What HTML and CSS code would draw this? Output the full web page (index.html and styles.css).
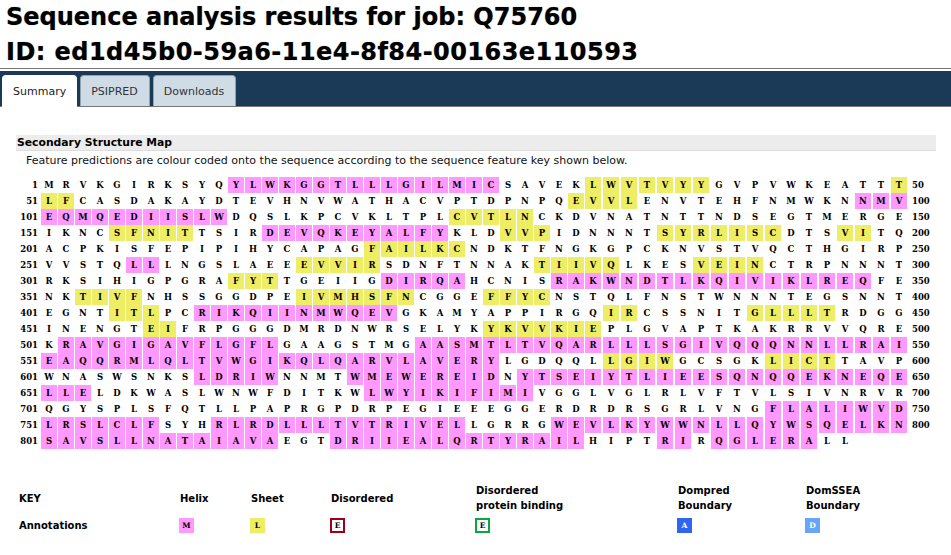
FILE: index.html
```html
<!DOCTYPE html>
<html lang="en">

<head>
    <meta charset="UTF-8">
    <meta name="viewport" content="width=device-width, initial-scale=1.0">
    <title>Sequence analysis results</title>
    <link rel="stylesheet" href="styles.css">
</head>

<body>

    <header class="page-title">
        <h1>Sequence analysis results for job: Q75760</h1>
        <h1 class="job-id">ID: ed1d45b0-59a6-11e4-8f84-00163e110593</h1>
    </header>

    <nav class="tab-bar">
        <a class="tab active">Summary</a>
        <a class="tab">PSIPRED</a>
        <a class="tab">Downloads</a>
    </nav>

    <section class="panel">
        <h2 class="panel-title">Secondary Structure Map</h2>
        <p class="panel-note">Feature predictions are colour coded onto the sequence according to the sequence feature key shown below.</p>

        <div id="seqMap" class="seq-map"></div>

        <div class="key">
            <div class="key-head first">KEY</div>
            <div class="key-head">Helix</div>
            <div class="key-head">Sheet</div>
            <div class="key-head">Disordered</div>
            <div class="key-head">Disordered<br>protein binding</div>
            <div class="key-head">Dompred<br>Boundary</div>
            <div class="key-head">DomSSEA<br>Boundary</div>

            <div class="key-label first">Annotations</div>
            <div><span class="swatch helix">M</span></div>
            <div><span class="swatch sheet">L</span></div>
            <div><span class="swatch disordered">E</span></div>
            <div><span class="swatch binding">E</span></div>
            <div><span class="swatch dompred">A</span></div>
            <div><span class="swatch domssea">D</span></div>
        </div>
    </section>

    <script src="seqmap.js"></script>

</body>

</html>
```

FILE: styles.css
```css
html,
body {
    margin: 0;
    padding: 0;
    background-color: #fff;
    color: #000;
    font-family: 'DejaVu Sans', Verdana, sans-serif;
}

body {
    height: 555px;
    overflow: hidden;
}

.page-title {
    height: 68px;
    padding-left: 6px;
    border-bottom: 1px solid #777;
}

.page-title h1 {
    margin: 0;
    font-size: 24px;
    line-height: 35px;
    font-weight: bold;
    white-space: nowrap;
    text-shadow: 0 0 1px rgba(0, 0, 0, 0.5);
}

.page-title .job-id {
    letter-spacing: 0.45px;
}

.tab-bar {
    display: flex;
    align-items: flex-end;
    gap: 3px;
    height: 35px;
    margin-top: 2px;
    padding-left: 2px;
    background-color: #1a3a57;
    border-bottom: 1px solid #777;
}

.tab {
    height: 30px;
    line-height: 32px;
    padding: 0 11px 0 10px;
    background-color: #cfdce6;
    border: 1px solid #8fa3b3;
    border-bottom: none;
    border-radius: 4px 4px 0 0;
    font-size: 11px;
    color: #333;
}

.tab.active {
    height: 31px;
    margin-bottom: -1px;
    padding: 0 10px;
    background-color: #fff;
    border-color: #fff;
    color: #222;
}

.panel {
    padding: 28px 15px 0 16px;
}

.panel-title {
    margin: 0;
    padding-left: 1px;
    height: 15px;
    line-height: 15px;
    background-color: #ececec;
    border-bottom: 1px solid #ddd;
    font-size: 10.8px;
    font-weight: bold;
}

.panel-note {
    margin: 2px 0 0 10px;
    font-size: 11px;
    line-height: 16px;
    color: #111;
}

.seq-map {
    margin-top: 8px;
    display: grid;
    grid-template-columns: 25px repeat(32, 17px) repeat(18, 18px) auto;
    grid-auto-rows: 16px;
    font-family: 'DejaVu Serif', 'Courier New', serif;
    font-size: 8.5px;
    font-weight: bold;
    line-height: 16px;
}

.seq-num {
    padding-right: 3px;
    text-align: right;
}

.seq-num.end {
    padding: 0 0 0 3px;
    text-align: left;
}

.res {
    width: 16px;
    text-align: center;
}

.res.helix {
    background-color: #ff99ff;
}

.res.sheet {
    background-color: #eeee66;
}

.key {
    margin-top: 34px;
    margin-left: 3px;
    display: grid;
    grid-template-columns: 161px 71px 80px 145px 202px 128px 1fr;
    grid-template-rows: 30px 15px;
    row-gap: 5px;
    font-size: 10px;
    font-weight: bold;
    line-height: 15px;
}

.key-head {
    align-self: center;
}

.key-label {
    line-height: 15px;
}

.swatch {
    display: block;
    box-sizing: border-box;
    width: 15px;
    height: 15px;
    margin-left: -1px;
    font-family: 'DejaVu Serif', 'Courier New', serif;
    font-size: 7.5px;
    line-height: 15px;
    text-align: center;
}

.swatch.helix {
    background-color: #ff99ff;
}

.swatch.sheet {
    background-color: #eeee66;
}

.swatch.disordered {
    border: 2px solid #a00014;
    line-height: 11px;
}

.swatch.binding {
    border: 2px solid #0aa83c;
    line-height: 11px;
}

.swatch.dompred {
    background-color: #2f66f0;
    color: #fff;
}

.swatch.domssea {
    background-color: #66a6f5;
    color: #fff;
}
```

FILE: seqmap.js
```js
// [..] is helix, {..} is sheet, one string for each 50 residues
var rows = [
    'MRVKGIRKSYQ[YLWKGGTLLLGILMIC]SAVEK{LWVTVYY}GVPVWKEATT{T}',
    '{LF}CASDAKAYDTEVHNVWATHACVPTDPNPQ{EVVL}ENVTEHFNMWKN[NMV]',
    '[EQMQEDIISLW]DQSLKPCVKLTPL{CVTLN}CKDVNATNTTNDSEGTMERGE',
    'IKNC{SFNIT}TSIR[DEVQKEYALFY]KLD{VVP}IDNNNT{SYRLISC}DTS{VI}TQ',
    'ACPKISFEPIPIHYCAPAG{FAILKC}NDKTFNGKGPCKNVSTVQCTHGIRP',
    'VVSTQ[LL]LNGSLAEE{EVVIR}SDNFTNNAK{TIIVQ}LKES{VEIN}CTRPNNNT',
    'RKSIHIGPGRA{FYT}TGEIIG[DIRQA]HCNIS[RAKWNDTLKQIVIKLREQ]FE',
    'NK{TIVF}NHSSGGDPE{IVMHSFN}CGGE{FFYC}NSTQLFNSTWNNNTEGSNNT',
    'EGNT{ITL}PC[RIKQIINMWQEV]GKAMYAPPIRGQ{IR}CSSNIT{GLLLT}RDGG',
    'INENGT{EI}FRPGGGDMRDNWRSELYK{YKVVKIE}PLGVAPTKAKRRVVQRE',
    'K[RAVGIGAVFLGFL]GAAGSTMG[AASMTLTVQARLLLSGIVQQQNNLLRAI]',
    '[EAQQRMLQLTVWGIKQLQARVLAVERY]LGDQQL{LGIW}GCSGK{LICT}TAVP',
    'WNASWSNKS[LDRIW]NNMT[WMEWEREID]N[YTSEIYTLIEESQNQQEKNEQE]',
    '[LLE]LDKWASLWNWFDITKW[LWYIKIFIMI]VGGLVGLRLVFTVLSIVNRVR',
    'QGYSPLSFQTLLPAPRGPDRPEGIEEEGGERDRDRSGRLVNG[FLALIWVD]',
    '[LRSLCLF]SYH[RLRDLLLTVTRIVEL]LGRRG[WEVLKYWWNLLQYWSQELKN]',
    '[SAVSLLNATAIAVA]EGT[DRIIEALQRTYRAIL]HIPT[RI]R[QGLERA]LL'
];

function addCell(map, text, cls) {
    var cell = document.createElement('span');
    cell.className = cls;
    cell.textContent = text;
    map.appendChild(cell);
}

function drawMap() {
    var map = document.getElementById('seqMap');

    rows.forEach(function(row, r) {
        var type = '';
        var count = 0;

        addCell(map, r * 50 + 1, 'seq-num');

        for (var i = 0; i < row.length; i++) {
            var c = row[i];
            if (c === '[') {
                type = ' helix';
            } else if (c === '{') {
                type = ' sheet';
            } else if (c === ']' || c === '}') {
                type = '';
            } else {
                addCell(map, c, 'res' + type);
                count++;
            }
        }

        if (count === 50) {
            addCell(map, (r + 1) * 50, 'seq-num end');
        }
    });
}

drawMap();
```
